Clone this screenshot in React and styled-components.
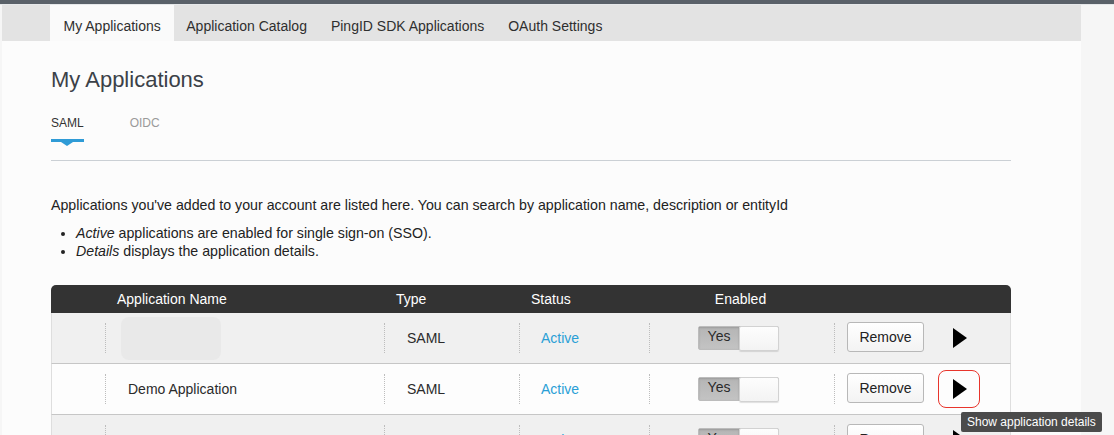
import React from "react";
import styled, { createGlobalStyle } from "styled-components";

const GlobalStyle = createGlobalStyle`
  html, body {
    margin: 0;
    padding: 0;
    background: #f6f6f6;
    font-family: "Liberation Sans", Arial, Helvetica, sans-serif;
    color: #333;
    overflow: hidden;
  }
`;

const TopBar = styled.div`
  height: 4px;
  background: #5a6169;
  border-bottom: 1px solid #e6e8ea;
`;

const Page = styled.div`
  width: 1079px;
  margin-left: 2px;
  background: #fcfcfc;
  min-height: 440px;
`;

const NavBar = styled.nav`
  display: flex;
  height: 36px;
  background: #e3e3e3;
  padding-left: 48px;
`;

const NavTab = styled.div`
  display: flex;
  align-items: center;
  padding: 6px ${(p) => (p.active ? "13.5px" : "12px")} 0;
  font-size: 14px;
  color: #2f2f2f;
  background: ${(p) => (p.active ? "#fafafa" : "transparent")};
`;

const Content = styled.main`
  padding-left: 49px;
  width: 960px;
`;

const Title = styled.h1`
  margin: 26px 0 0;
  font-size: 22px;
  line-height: 26px;
  font-weight: normal;
  color: #3b4148;
`;

const SubTabs = styled.div`
  display: flex;
  gap: 46px;
  margin-top: 22px;
  border-bottom: 1px solid #cbd0d5;
  padding-bottom: 14px;
`;

const SubTab = styled.div`
  display: flex;
  flex-direction: column;
  align-items: stretch;
  font-size: 12px;
  line-height: 16px;
  color: ${(p) => (p.active ? "#333" : "#9a9a9a")};
`;

const Indicator = styled.div`
  margin-top: 8px;
  height: 3px;
  background: #2f9bd6;
  visibility: ${(p) => (p.active ? "visible" : "hidden")};
`;

const IndicatorTip = styled.div`
  align-self: center;
  width: 0;
  height: 0;
  border-left: 6px solid transparent;
  border-right: 6px solid transparent;
  border-top: 4px solid #2f9bd6;
  visibility: ${(p) => (p.active ? "visible" : "hidden")};
`;

const Intro = styled.p`
  margin: 35px 0 0;
  font-size: 14.2px;
  line-height: 18px;
  color: #222;
`;

const Bullets = styled.ul`
  margin: 10px 0 0;
  padding-left: 25px;
  font-size: 14.2px;
  line-height: 18px;
  color: #222;
`;

const Table = styled.div`
  margin-top: 25px;
  width: 960px;
`;

const cols = "53px 279px 135px 130px 185px 178px";

const HeadRow = styled.div`
  display: grid;
  grid-template-columns: ${cols};
  height: 28px;
  background: #333;
  border-radius: 5px 5px 0 0;
  color: #fff;
  font-size: 14px;
`;

const HeadCell = styled.div`
  display: flex;
  align-items: center;
  justify-content: ${(p) => (p.center ? "center" : "flex-start")};
  padding-left: ${(p) => (p.center ? "0" : "13px")};
`;

const Row = styled.div`
  display: grid;
  grid-template-columns: ${cols};
  background: ${(p) => (p.odd ? "#f0f0f0" : "#fdfdfd")};
  border-left: 1px solid #dedede;
  border-right: 1px solid #dedede;
  border-bottom: 1px solid #c6c6c6;
  box-sizing: border-box;
  height: 51px;
  font-size: 14px;
  color: #2b2b2b;
`;

const Cell = styled.div`
  display: flex;
  align-items: center;
`;

const Sep = styled.span`
  flex: none;
  width: 0;
  height: 30px;
  border-left: 1px dotted #bdbdbd;
  margin-right: ${(p) => p.gap}px;
`;

const Placeholder = styled.div`
  width: 100px;
  height: 43px;
  border-radius: 8px;
  background: #e9e9e9;
`;

const StatusLink = styled.span`
  color: #2a9fd6;
`;

const Toggle = styled.div`
  display: flex;
  width: 81px;
  height: 24px;
  border: 1px solid #bcbcbc;
  border-radius: 2px;
  box-sizing: border-box;
`;

const ToggleOn = styled.div`
  width: 40px;
  background: linear-gradient(#b5b5b5, #c3c3c3);
  box-shadow: inset 0 1px 2px rgba(0, 0, 0, 0.15);
  font-size: 14px;
  line-height: 19px;
  text-align: center;
  color: #2a2a2a;
`;

const ToggleKnob = styled.div`
  flex: 1;
  margin: -1px -1px -2px 0;
  background: linear-gradient(#fdfdfd, #f3f3f3);
  border: 1px solid #d2d2d2;
  border-radius: 2px;
  box-shadow: 0 1px 1px rgba(0, 0, 0, 0.12);
`;

const RemoveButton = styled.button`
  width: 77px;
  height: 30px;
  margin-top: -2px;
  background: linear-gradient(#ffffff, #f3f3f3);
  border: 1px solid #b8b8b8;
  border-radius: 3px;
  font-family: inherit;
  font-size: 14px;
  color: #222;
  padding: 0;
`;

const DetailsButton = styled.div`
  position: relative;
  margin-left: 14px;
  width: 42px;
  height: 38px;
  box-sizing: border-box;
  display: flex;
  align-items: center;
  justify-content: center;
  border: 1.5px solid ${(p) => (p.focused ? "#e8352c" : "transparent")};
  border-radius: 8px;
`;

const Arrow = styled.div`
  width: 0;
  height: 0;
  border-top: 10.5px solid transparent;
  border-bottom: 10.5px solid transparent;
  border-left: 14px solid #000;
  margin-left: 2px;
`;

const Tooltip = styled.div`
  position: absolute;
  left: 22px;
  top: 41px;
  white-space: nowrap;
  background: #4b4b4b;
  color: #fff;
  font-size: 12px;
  line-height: 20px;
  padding: 0 6px;
  border-radius: 2px;
  z-index: 2;
`;

const apps = [
  { name: null, type: "SAML", status: "Active" },
  { name: "Demo Application", type: "SAML", status: "Active", focused: true },
  { name: "Test Demo", type: "SAML", status: "Active" },
];

function AppRow({ app, odd }) {
  return (
    <Row odd={odd}>
      <Cell />
      <Cell>
        <Sep gap={app.name ? 22 : 15} />
        {app.name ? app.name : <Placeholder />}
      </Cell>
      <Cell>
        <Sep gap={22} />
        {app.type}
      </Cell>
      <Cell>
        <Sep gap={21} />
        <StatusLink>{app.status}</StatusLink>
      </Cell>
      <Cell>
        <Sep gap={48} />
        <Toggle>
          <ToggleOn>Yes</ToggleOn>
          <ToggleKnob />
        </Toggle>
      </Cell>
      <Cell>
        <Sep gap={12} />
        <RemoveButton>Remove</RemoveButton>
        <DetailsButton focused={app.focused}>
          <Arrow />
          {app.focused && <Tooltip>Show application details</Tooltip>}
        </DetailsButton>
      </Cell>
    </Row>
  );
}

export default function App() {
  return (
    <>
      <GlobalStyle />
      <TopBar />
      <Page>
        <NavBar>
          <NavTab active>My Applications</NavTab>
          <NavTab>Application Catalog</NavTab>
          <NavTab>PingID SDK Applications</NavTab>
          <NavTab>OAuth Settings</NavTab>
        </NavBar>
        <Content>
          <Title>My Applications</Title>
          <SubTabs>
            <SubTab active>
              SAML
              <Indicator active />
              <IndicatorTip active />
            </SubTab>
            <SubTab>
              OIDC
              <Indicator />
              <IndicatorTip />
            </SubTab>
          </SubTabs>
          <Intro>
            Applications you've added to your account are listed here. You can
            search by application name, description or entityId
          </Intro>
          <Bullets>
            <li>
              <em>Active</em> applications are enabled for single sign-on (SSO).
            </li>
            <li>
              <em>Details</em> displays the application details.
            </li>
          </Bullets>
          <Table>
            <HeadRow>
              <HeadCell />
              <HeadCell>Application Name</HeadCell>
              <HeadCell>Type</HeadCell>
              <HeadCell>Status</HeadCell>
              <HeadCell center>Enabled</HeadCell>
              <HeadCell />
            </HeadRow>
            {apps.map((app, i) => (
              <AppRow key={i} app={app} odd={i % 2 === 0} />
            ))}
          </Table>
        </Content>
      </Page>
    </>
  );
}
